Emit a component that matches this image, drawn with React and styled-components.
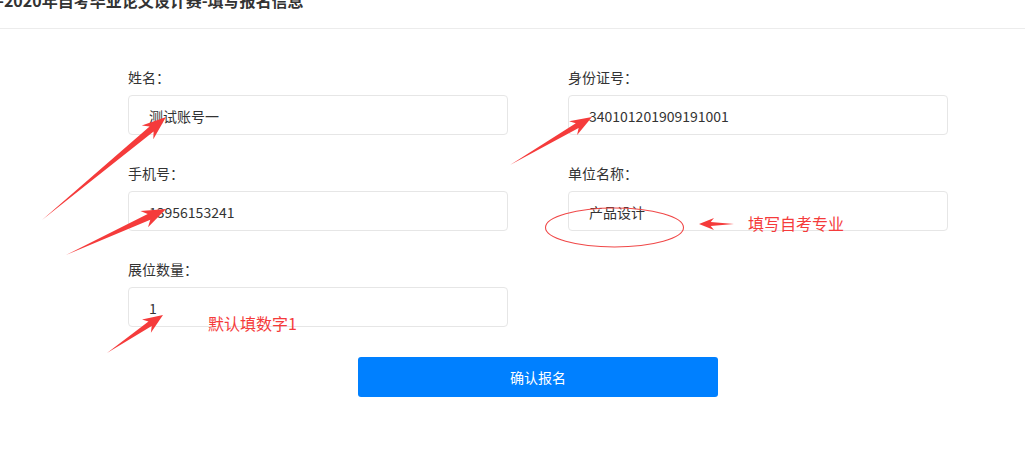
import React from 'react';
import styled, { createGlobalStyle } from 'styled-components';

const GlobalStyle = createGlobalStyle`
body {
  margin: 0;
  background: #fff;
  font-family: "Microsoft YaHei", "Noto Sans CJK SC", "Noto Sans", sans-serif;
  color: #333;
  overflow: hidden;
}
`

const fields = [
    { label: "姓名：", value: "测试账号一" },
    { label: "身份证号：", value: "340101201909191001" },
    { label: "手机号：", value: "13956153241" },
    { label: "单位名称：", value: "产品设计" },
    { label: "展位数量：", value: "1" },
];

// screenshot annotations: [tailX, tailY, tipX, tipY, headLength, headHalfWidth]
const arrows = [
    [42, 220, 166, 117, 24, 9],
    [66, 255, 166, 209, 24, 9],
    [510, 165, 592, 117, 22, 8],
    [107, 353, 163, 315, 20, 8],
    [734, 224, 699, 224, 15, 6],
];

function arrowPoints([x1, y1, x2, y2, h, w]) {
    const dx = x2 - x1;
    const dy = y2 - y1;
    const len = Math.hypot(dx, dy);
    const ux = dx / len, uy = dy / len;
    const nx = -uy, ny = ux;
    const s = w * 0.35;
    const pts = [
        [x1, y1],
        [x2 - ux * h * 0.78 + nx * s, y2 - uy * h * 0.78 + ny * s],
        [x2 - ux * h + nx * w, y2 - uy * h + ny * w],
        [x2, y2],
        [x2 - ux * h - nx * w, y2 - uy * h - ny * w],
        [x2 - ux * h * 0.78 - nx * s, y2 - uy * h * 0.78 - ny * s],
    ];
    return pts.map(p => p[0].toFixed(1) + "," + p[1].toFixed(1)).join(" ");
}

export default function App() {
    return (
        <Page>
            <GlobalStyle />
            <Header>
                <Title>-2020年自考毕业论文设计赛-填写报名信息</Title>
            </Header>

            <FormContainer>
                <FieldGrid>
                    {fields.map(f => (
                        <Field key={f.label}>
                            <Label>{f.label}</Label>
                            <TextInput defaultValue={f.value} readOnly />
                        </Field>
                    ))}
                </FieldGrid>
                <SubmitButton>确认报名</SubmitButton>
            </FormContainer>

            <Markup width="1025" height="466" viewBox="0 0 1025 466">
                {arrows.map((a, i) => (
                    <polygon key={i} points={arrowPoints(a)} fill="#f53b3b" />
                ))}
                <ellipse cx="614.5" cy="227.5" rx="69" ry="19.5" fill="none" stroke="#f04848" strokeWidth="1.1" />
            </Markup>
            <Note left={748} top={213}>填写自考专业</Note>
            <Note left={208} top={313}>默认填数字1</Note>
        </Page>
    );
}

const Page = styled.div`
position: relative;
width: 1025px;
height: 466px;
`

// ---------------------------------------------------

const Header = styled.div`
display: flow-root;
height: 28px;
border-bottom: 1px solid #ececec;
`

const Title = styled.h2`
margin: -10px 0 0 -2px;
font-size: 16px;
line-height: 20px;
font-weight: bold;
color: #333;
white-space: nowrap;
`

// ---------------------------------------------------

const FormContainer = styled.div`
width: 820px;
margin-left: 128px;
padding-top: 38px;
display: flex;
flex-direction: column;
align-items: center;
`

const FieldGrid = styled.div`
width: 100%;
display: grid;
grid-template-columns: 380px 380px;
column-gap: 60px;
row-gap: 28px;
`

const Field = styled.div`
display: flex;
flex-direction: column;
`

const Label = styled.label`
font-size: 14px;
line-height: 20px;
color: #333;
margin-bottom: 8px;
`

const TextInput = styled.input`
box-sizing: border-box;
width: 100%;
height: 40px;
padding: 2px 20px 0;
border: 1px solid #e6e6e6;
border-radius: 4px;
outline: none;
font-family: inherit;
font-size: 14px;
color: #333;
background: #fff;
`

const SubmitButton = styled.button`
margin-top: 30px;
width: 360px;
height: 40px;
border: none;
border-radius: 3px;
background-color: #0080ff;
color: #fff;
font-family: inherit;
font-size: 14px;
cursor: pointer;
`

// ---------------------------------------------------

const Markup = styled.svg`
position: absolute;
top: 0;
left: 0;
pointer-events: none;
`

const Note = styled.span`
position: absolute;
left: ${props => props.left}px;
top: ${props => props.top}px;
font-size: 16px;
line-height: 20px;
color: #f53b3b;
white-space: nowrap;
`
